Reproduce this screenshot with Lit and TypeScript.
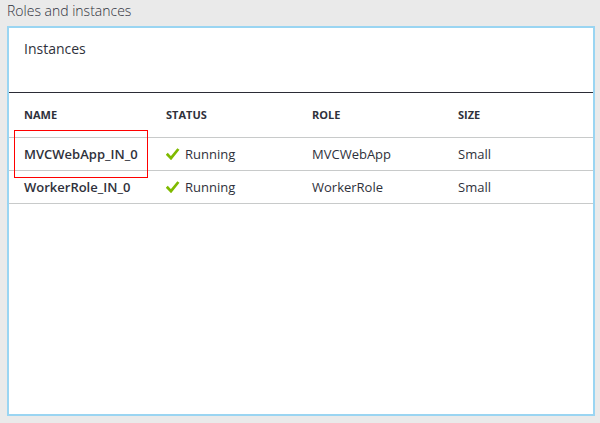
import { LitElement, html, css } from "lit";
import { customElement, property } from "lit/decorators.js";
import { classMap } from "lit/directives/class-map.js";

interface Instance {
  name: string;
  status: string;
  role: string;
  size: string;
  marked?: boolean;
}

@customElement("instance-table")
export class InstanceTable extends LitElement {
  @property({ attribute: false }) instances: Instance[] = [];

  static styles = css`
    :host {
      display: block;
    }
    .table {
      width: 100%;
      table-layout: fixed;
      border-spacing: 0;
      border-top: 1px solid #2b2c36;
      font-size: 13px;
      line-height: 18px;
      text-align: left;
    }
    .cell {
      padding: 7px 0 7px 11px;
      border-bottom: 1px solid #c8caca;
      font-weight: 400;
      white-space: nowrap;
    }
    .head {
      padding-top: 13px;
      padding-bottom: 13px;
      font-size: 11px;
      font-weight: 700;
    }
    .first {
      padding-left: 15px;
    }
    .name {
      position: relative;
      font-weight: 600;
    }
    .marked::after {
      content: "";
      position: absolute;
      top: -8px;
      left: 5px;
      right: 7px;
      bottom: -8px;
      border: 1px solid #f00;
      z-index: 1;
    }
    .status {
      display: flex;
      align-items: center;
      gap: 5px;
    }
    .tick {
      width: 14px;
      height: 12px;
      flex: none;
    }
  `;

  render() {
    return html`
      <table class="table" aria-label="Instances">
        <thead>
          <tr>
            <th class="cell head first" scope="col">NAME</th>
            <th class="cell head" scope="col">STATUS</th>
            <th class="cell head" scope="col">ROLE</th>
            <th class="cell head" scope="col">SIZE</th>
          </tr>
        </thead>
        <tbody>
          ${this.instances.map(
            (item) => html`
              <tr>
                <th
                  scope="row"
                  class=${classMap({ cell: true, first: true, name: true, marked: !!item.marked })}
                >${item.name}</th>
                <td class="cell">
                  <span class="status">
                    <svg class="tick" viewBox="0 0 14 12" aria-hidden="true">
                      <path d="M0.8 5.8 L5 10.2 L12.4 1" fill="none" stroke="#7fba00" stroke-width="2.7" />
                    </svg>
                    ${item.status}
                  </span>
                </td>
                <td class="cell">${item.role}</td>
                <td class="cell">${item.size}</td>
              </tr>
            `
          )}
        </tbody>
      </table>
    `;
  }
}

@customElement("app-root")
export class AppRoot extends LitElement {
  private instances: Instance[] = [
    { name: "MVCWebApp_IN_0", status: "Running", role: "MVCWebApp", size: "Small", marked: true },
    { name: "WorkerRole_IN_0", status: "Running", role: "WorkerRole", size: "Small" },
  ];

  static styles = css`
    :host {
      display: flex;
      flex-direction: column;
      box-sizing: border-box;
      min-height: 100vh;
      padding: 0 5px 7px 7px;
      background: #eaeaea;
      color: #2f313b;
      font-family: "Open Sans", "Noto Sans", sans-serif;
    }
    .title {
      margin: 0;
      padding-bottom: 4px;
      font-size: 14px;
      font-weight: 300;
      line-height: 22px;
    }
    .panel {
      flex: 1;
      border: 2px solid #9ad5f2;
      background: #fff;
    }
    .heading {
      margin: 0;
      padding: 10px 15px 32px;
      font-size: 14px;
      font-weight: 400;
      line-height: 22px;
    }
  `;

  render() {
    return html`
      <h1 class="title">Roles and instances</h1>
      <section class="panel">
        <h2 class="heading">Instances</h2>
        <instance-table .instances=${this.instances}></instance-table>
      </section>
    `;
  }
}
